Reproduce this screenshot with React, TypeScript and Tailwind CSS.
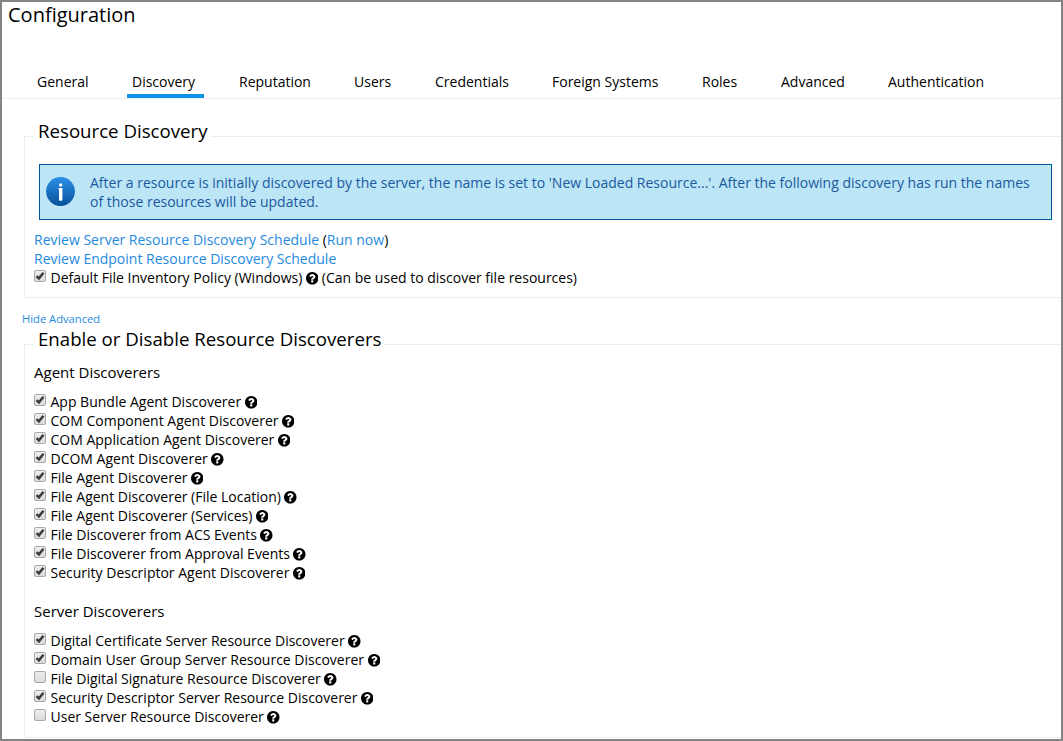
import type { ReactNode } from "react";

const tabs = [
  { label: "General", width: "w-[52px]" },
  { label: "Discovery", width: "w-[64px]", active: true },
  { label: "Reputation", width: "w-[72px]" },
  { label: "Users", width: "w-[38px]" },
  { label: "Credentials", width: "w-[74px]" },
  { label: "Foreign Systems", width: "w-[107px]" },
  { label: "Roles", width: "w-[36px]" },
  { label: "Advanced", width: "w-[64px]" },
  { label: "Authentication", width: "w-[96px]" },
];

const agentDiscoverers = [
  { label: "App Bundle Agent Discoverer", checked: true },
  { label: "COM Component Agent Discoverer", checked: true },
  { label: "COM Application Agent Discoverer", checked: true },
  { label: "DCOM Agent Discoverer", checked: true },
  { label: "File Agent Discoverer", checked: true },
  { label: "File Agent Discoverer (File Location)", checked: true },
  { label: "File Agent Discoverer (Services)", checked: true },
  { label: "File Discoverer from ACS Events", checked: true },
  { label: "File Discoverer from Approval Events", checked: true },
  { label: "Security Descriptor Agent Discoverer", checked: true },
];

const serverDiscoverers = [
  { label: "Digital Certificate Server Resource Discoverer", checked: true },
  { label: "Domain User Group Server Resource Discoverer", checked: true },
  { label: "File Digital Signature Resource Discoverer", checked: false },
  { label: "Security Descriptor Server Resource Discoverer", checked: true },
  { label: "User Server Resource Discoverer", checked: false },
];

function HelpIcon() {
  return (
    <svg viewBox="0 0 1536 1536" className="mt-[4px] ml-[3.500px] h-[12.500px] w-[12.500px] shrink-0" fill="currentColor">
      <path d="M896 1248v-192q0-14-9-23t-23-9H672q-14 0-23 9t-9 23v192q0 14 9 23t23 9h192q14 0 23-9t9-23zm256-672q0-88-55.500-163T958 297t-170-41q-243 0-371 213-15 24 8 42l132 100q7 6 19 6 16 0 25-12 53-68 86-92 34-24 86-24 48 0 85.500 26t37.500 59q0 38-20 61t-68 45q-63 28-115.500 86.500T640 892v36q0 14 9 23t23 9h192q14 0 23-9t9-23q0-19 21.500-49.500T972 829q32-18 49-28.500t46-35 44.500-48 28-60.500 12.500-81zm384 192q0 209-103 385.500T1153.500 1433 768 1536t-385.500-103T103 1153.500 0 768t103-385.500T382.500 103 768 0t385.500 103T1433 382.500 1536 768z" />
    </svg>
  );
}

function CheckRow({ label, checked, children }: { label: string; checked: boolean; children?: ReactNode }) {
  return (
    <div className="flex h-[19px] items-start whitespace-nowrap">
      <span
        role="checkbox"
        aria-checked={checked}
        aria-label={label}
        className="mt-[2px] mr-[4.500px] flex h-[12px] w-[12px] shrink-0 items-center justify-center rounded-[2px] border border-[#a8a8a8] bg-linear-to-b from-[#eeeeee] to-[#dcdcdc]"
      >
        {checked && (
          <svg viewBox="0 0 10 10" className="h-[10px] w-[10px]">
            <path d="M1.500 5.200 3.900 7.400 8.500 1.700" fill="none" stroke="#3c3c3c" strokeWidth="2.500" />
          </svg>
        )}
      </span>
      <span>{label}</span>
      <HelpIcon />
      {children}
    </div>
  );
}

function Panel({ title, className, children }: { title: string; className: string; children: ReactNode }) {
  return (
    <section className={`ml-[22px] border border-r-0 border-[#e8eef3] pl-[9px] ${className}`}>
      <h2 className="-mt-[19px] w-fit bg-white pr-[3px] pl-[4px] text-[18.670px] leading-[26px] whitespace-nowrap">{title}</h2>
      {children}
    </section>
  );
}

export default function App() {
  return (
    <div className="h-[741px] w-[1063px] overflow-hidden border-2 border-[#848484] bg-white font-['Open_Sans',sans-serif] text-[14px] leading-[19px] text-black">
      <h1 className="h-[66px] pl-[6px] text-[20px] leading-[26px]">Configuration</h1>
      <nav className="flex h-[31px] gap-[43px] border-b border-[#e8eef3] pt-[4px] pl-[35px] whitespace-nowrap">
        {tabs.map((tab) => (
          <div key={tab.label} className={`${tab.width} shrink-0`}>
            <div className={tab.active ? "-mr-[8px] -ml-[5px] h-[26px] border-b-4 border-[#0a93e8] pl-[5px]" : ""}>
              {tab.label}
            </div>
          </div>
        ))}
      </nav>

      <Panel title="Resource Discovery" className="mt-[37px] h-[162px]">
        <div className="mt-[20px] mr-[9px] ml-[5px] flex h-[56px] border border-[#00569b] bg-[#bce5f6] pt-[8px] text-[#1b59a0]">
          <svg viewBox="0 0 29 29" className="mt-[4px] ml-[6px] h-[29px] w-[29px] shrink-0">
            <defs>
              <linearGradient id="info" x1="0" y1="0" x2="0" y2="1">
                <stop offset="0" stopColor="#2b8fe8" />
                <stop offset="1" stopColor="#07529a" />
              </linearGradient>
            </defs>
            <circle cx="14.500" cy="14.500" r="14.400" fill="url(#info)" />
            <circle cx="14.700" cy="8" r="1.700" fill="#fff" />
            <path d="M12.500 11h3.900v11.500q0 1.200-1 1.200h-1.400q-1 0-1-1.200V12.300h-.5z" fill="#fff" />
          </svg>
          <p className="ml-[15px] whitespace-nowrap">
            After a resource is initially discovered by the server, the name is set to 'New Loaded Resource...'. After the following discovery has run the names
            <br />
            of those resources will be updated.
          </p>
        </div>
        <div className="mt-[10px]">
          <div>
            <a className="text-[#1e8ae0]">Review Server Resource Discovery Schedule</a> (<a className="text-[#1e8ae0]">Run now</a>)
          </div>
          <div>
            <a className="text-[#1e8ae0]">Review Endpoint Resource Discovery Schedule</a>
          </div>
          <CheckRow label="Default File Inventory Policy (Windows)" checked>
            <span className="ml-[3.500px]">(Can be used to discover file resources)</span>
          </CheckRow>
        </div>
      </Panel>

      <div className="mt-[13px] h-[16px] pl-[20px] text-[11.200px] leading-[16px] text-[#1e8ae0]">Hide Advanced</div>

      <Panel title="Enable or Disable Resource Discoverers" className="mt-[17px] h-[394px]">
        <h3 className="mt-[11px] text-[15px]">Agent Discoverers</h3>
        <div className="mt-[10px]">
          {agentDiscoverers.map((item) => (
            <CheckRow key={item.label} {...item} />
          ))}
        </div>
        <h3 className="mt-[20px] text-[15px]">Server Discoverers</h3>
        <div className="mt-[10px]">
          {serverDiscoverers.map((item) => (
            <CheckRow key={item.label} {...item} />
          ))}
        </div>
      </Panel>
    </div>
  );
}
